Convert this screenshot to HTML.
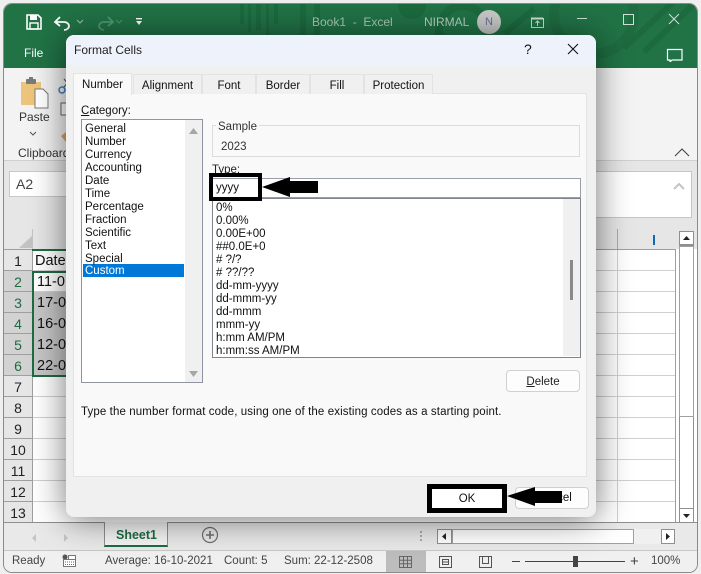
<!DOCTYPE html>
<html><head><meta charset="utf-8">
<style>
html,body{margin:0;padding:0;background:#efefef}
body{width:701px;height:574px;overflow:hidden;position:relative;font-family:"Liberation Sans",sans-serif;font-size:11.5px;color:#222}
div,span,svg{position:absolute}
.t{white-space:nowrap}
.h{background:#d0d0d0}.v{background:#d0d0d0}
.rn{left:4px;width:28px;text-align:center;font-size:14px;color:#222;height:20px;line-height:23px;background:#e6e6e6;border-bottom:1px solid #9f9f9f}
.li{left:85px;white-space:nowrap;height:13px;line-height:15px;color:#111}
.ti{left:216px;white-space:nowrap;height:13px;line-height:15px;color:#111}
.tab{top:74px;height:19px;line-height:22px;text-align:center;background:#f0f0f0;border:1px solid #e3e3e3;border-bottom:0;box-sizing:content-box;color:#111;font-size:11.5px}
.cell{left:37px;width:30px;font-size:14.5px;height:20px;line-height:23px;white-space:nowrap;overflow:hidden;color:#111}
</style></head><body>
<div id="win" style="left:4px;top:4px;width:693px;height:568px;background:#fff;border-radius:8px;overflow:hidden;box-shadow:0 0 0 1px #8a8a8a">

<div style="left:0;top:0;width:693px;height:64px;background:#217346"></div>
<svg style="left:0;top:0" width="693" height="64">
<g fill="#1c6a3e"><rect x="236" y="0" width="4" height="20"/><rect x="244" y="0" width="3" height="28"/><rect x="252" y="0" width="5" height="26"/><rect x="262" y="0" width="3" height="34"/><rect x="270" y="0" width="4" height="20"/><rect x="296" y="0" width="6" height="32"/><rect x="310" y="0" width="6" height="32"/><circle cx="408" cy="1" r="14"/></g>
<circle cx="459" cy="26" r="24" fill="none" stroke="#1c6a3e" stroke-width="8"/>
<circle cx="590" cy="10" r="40" fill="none" stroke="#1f6c41" stroke-width="10"/>
<g stroke="#1c6a3e" stroke-width="6"><path d="M620 44L680 -12"/><path d="M640 48L700 -10"/><path d="M500 30L530 5"/></g>
</svg>

<svg style="left:22px;top:10px" width="16" height="16" viewBox="0 0 16 16"><path d="M1 1H12L15 4V15H1Z" fill="none" stroke="#fff" stroke-width="1.6"/><rect x="4" y="1" width="7" height="5" fill="#fff"/><rect x="4" y="9" width="8" height="6" fill="none" stroke="#fff" stroke-width="1.4"/></svg>
<svg style="left:50px;top:12px" width="22" height="16" viewBox="0 0 22 16"><path d="M2 6H10C14 6 15 9 15 10C15 12 13 14 10 14" fill="none" stroke="#fff" stroke-width="1.8"/><path d="M6 1L1 6L6 10" fill="none" stroke="#fff" stroke-width="1.8"/></svg>
<svg style="left:72px;top:15px" width="8" height="6"><path d="M1 1L4 4L7 1" fill="none" stroke="#9fc4ad"/></svg>
<svg style="left:90px;top:12px" width="20" height="16" viewBox="0 0 20 16"><path d="M18 6H10C6 6 5 9 5 10C5 12 7 14 10 14" fill="none" stroke="#4e9a72" stroke-width="1.8"/><path d="M14 1L19 6L14 10" fill="none" stroke="#4e9a72" stroke-width="1.8"/></svg>
<svg style="left:111px;top:15px" width="8" height="6"><path d="M1 1L4 4L7 1" fill="none" stroke="#4e9a72"/></svg>
<svg style="left:131px;top:13px" width="9" height="10"><rect x="1" y="1" width="6" height="1.4" fill="#fff"/><path d="M1 4H7L4 8Z" fill="#fff"/></svg>
<div class="t" style="left:20px;top:42px;color:#fff;font-size:12px">File</div>
<div class="t" style="left:308px;top:11px;color:#a9cbb8;font-size:12px">Book1&nbsp; -&nbsp; Excel</div>
<div class="t" style="left:420px;top:11px;color:#b5d2c1;font-size:12px">NIRMAL</div>
<div style="left:473px;top:6px;width:24px;height:24px;border-radius:50%;background:#c8cbc9;color:#6c6c92;text-align:center;line-height:24px;font-size:11px">N</div>
<svg style="left:524px;top:9px" width="16" height="16"><rect x="3.5" y="5.5" width="12" height="9" fill="none" stroke="#cfe0d6"/><path d="M3 5.500H15" stroke="#cfe0d6" stroke-width="2"/><path d="M9.500 13V8M7.500 10L9.500 8L11.500 10" fill="none" stroke="#cfe0d6"/></svg>
<div style="left:573px;top:14px;width:10px;height:1px;background:#cfe0d6"></div>
<div style="left:619px;top:10px;width:9px;height:9px;border:1px solid #cfe0d6"></div>
<svg style="left:664px;top:9px" width="12" height="12"><path d="M1 1L11 11M11 1L1 11" stroke="#cfe0d6" stroke-width="1"/></svg>
<svg style="left:661px;top:40px" width="18" height="18"><path d="M2.500 5.500H17V16H7L5 18V16H2.500Z" fill="none" stroke="#fff" stroke-width="1.200"/></svg>

<div style="left:0;top:64px;width:693px;height:92px;background:#f3f3f3;border-bottom:1px solid #d0d0d0"></div>
<svg style="left:16px;top:72px" width="34" height="34" viewBox="0 0 34 34">
<path d="M1 6H21V29H1Z" fill="#edc47b"/><rect x="6" y="3" width="10" height="5" rx="1" fill="#7a7a7a"/><rect x="9" y="1" width="4" height="3" fill="#7a7a7a"/><path d="M15 13H23L28 18V32H15Z" fill="#fff" stroke="#7a7a7a"/></svg>
<div class="t" style="left:15px;top:106px;color:#333;font-size:12px">Paste</div>
<svg style="left:25px;top:127px" width="8" height="5"><path d="M1 1L4 4L7 1" fill="none" stroke="#555"/></svg>
<div class="t" style="left:14px;top:142px;color:#333;font-size:12px">Clipboard</div>
<svg style="left:54px;top:70px" width="12" height="70"><circle cx="4" cy="16" r="3" fill="none" stroke="#3b7fc4" stroke-width="1.500"/><path d="M6 13L12 6M6 5L12 12" stroke="#555"/><rect x="3" y="29" width="9" height="12" fill="#fff" stroke="#666"/><path d="M3 62L12 55V66L8 68Z" fill="#d9a860"/></svg>
<svg style="left:670px;top:143px" width="16" height="10"><path d="M1 9L8 2L15 9" fill="none" stroke="#444" stroke-width="1.100"/></svg>

<div style="left:0;top:157px;width:693px;height:68px;background:#e6e6e6"></div>
<div style="left:5px;top:167px;width:60px;height:26px;background:#fff;border:1px solid #c9c9c9;box-sizing:border-box"></div>
<div class="t" style="left:12px;top:172px;font-size:14px;color:#444">A2</div>
<div style="left:560px;top:167px;width:128px;height:47px;background:#fff;border:1px solid #c6c6c6;box-sizing:border-box"></div>
<svg style="left:669px;top:179px" width="12" height="8"><path d="M1 6L6 1L11 6" fill="none" stroke="#c4c4c4" stroke-width="2"/></svg>

<div style="left:0;top:225px;width:693px;height:20px;background:#e6e6e6"></div>
<svg style="left:12px;top:229px" width="18" height="16"><path d="M17 2V15H3Z" fill="#c3c3c3"/></svg>
<div style="left:28px;top:225px;width:1px;height:20px;background:#c4c4c4"></div>
<div style="left:613px;top:225px;width:1px;height:20px;background:#a9a9a9"></div>
<div style="left:649px;top:231px;width:2px;height:10px;background:#1268b3"></div>
<div style="left:0;top:245px;width:671px;height:1px;background:#9f9f9f"></div>
<div style="left:671px;top:245px;width:1px;height:273px;background:#9f9f9f"></div>
<div style="left:28px;top:245px;width:1px;height:273px;background:#9f9f9f"></div>

<div class="h" style="left:29px;top:266px;width:642px;height:1px"></div>
<div class="h" style="left:29px;top:287px;width:642px;height:1px"></div>
<div class="h" style="left:29px;top:308px;width:642px;height:1px"></div>
<div class="h" style="left:29px;top:329px;width:642px;height:1px"></div>
<div class="h" style="left:29px;top:350px;width:642px;height:1px"></div>
<div class="h" style="left:29px;top:371px;width:642px;height:1px"></div>
<div class="h" style="left:29px;top:392px;width:642px;height:1px"></div>
<div class="h" style="left:29px;top:413px;width:642px;height:1px"></div>
<div class="h" style="left:29px;top:434px;width:642px;height:1px"></div>
<div class="h" style="left:29px;top:455px;width:642px;height:1px"></div>
<div class="h" style="left:29px;top:476px;width:642px;height:1px"></div>
<div class="h" style="left:29px;top:497px;width:642px;height:1px"></div>
<div class="v" style="left:613px;top:246px;width:1px;height:272px"></div>

<div class="rn" style="left:0;top:246px">1</div>
<div class="rn" style="left:0;top:267px;background:#d2d2d2;color:#1e6b42">2</div>
<div class="rn" style="left:0;top:288px;background:#d2d2d2;color:#1e6b42">3</div>
<div class="rn" style="left:0;top:309px;background:#d2d2d2;color:#1e6b42">4</div>
<div class="rn" style="left:0;top:330px;background:#d2d2d2;color:#1e6b42">5</div>
<div class="rn" style="left:0;top:351px;background:#d2d2d2;color:#1e6b42">6</div>
<div class="rn" style="left:0;top:372px">7</div>
<div class="rn" style="left:0;top:393px">8</div>
<div class="rn" style="left:0;top:414px">9</div>
<div class="rn" style="left:0;top:435px">10</div>
<div class="rn" style="left:0;top:456px">11</div>
<div class="rn" style="left:0;top:477px">12</div>
<div class="rn" style="left:0;top:498px">13</div>

<div style="left:29px;top:288px;width:40px;height:84px;background:#c6c6c6"></div>
<div style="left:28px;top:267px;width:40px;height:106px;border:2px solid #1e6b42;box-sizing:border-box"></div>
<div style="left:28px;top:245px;width:40px;height:2px;background:#1e6b42"></div>
<div class="cell" style="left:31px;top:246px">Date</div>
<div class="cell" style="left:33px;top:267px">11-0</div>
<div class="cell" style="left:33px;top:288px">17-0</div>
<div class="cell" style="left:33px;top:309px">16-0</div>
<div class="cell" style="left:33px;top:330px">12-0</div>
<div class="cell" style="left:33px;top:351px">22-0</div>

<div style="left:675px;top:227px;width:15px;height:292px;background:#fff;border:1px solid #8f8f8f;box-sizing:border-box"></div>
<div style="left:675px;top:227px;width:15px;height:15px;background:#fff;border:1px solid #8f8f8f;box-sizing:border-box;border-bottom:2px solid #8f8f8f"></div>
<svg style="left:678px;top:231px" width="9" height="6"><path d="M1 5H8L4.500 1Z" fill="#222"/></svg>
<div style="left:675px;top:242px;width:15px;height:171px;background:#fff;border:1px solid #a0a0a0;box-sizing:border-box"></div>
<div style="left:675px;top:504px;width:15px;height:15px;background:#fff;border:1px solid #8f8f8f;box-sizing:border-box"></div>
<svg style="left:678px;top:509px" width="9" height="6"><path d="M1 1H8L4.500 5Z" fill="#222"/></svg>

<div style="left:0;top:518px;width:693px;height:28px;background:#e9e9e9;border-top:1px solid #8f8f8f;box-sizing:border-box"></div>
<svg style="left:27px;top:529px" width="40" height="10"><path d="M5 1V9L1 5Z" fill="#c5c5c5"/><path d="M33 1V9L37 5Z" fill="#c5c5c5"/></svg>
<div style="left:100px;top:518px;width:64px;height:25px;background:#f4f4f4;border:1px solid #8f8f8f;border-top:0;border-bottom:2px solid #1e6b42;box-sizing:border-box"></div>
<div class="t" style="left:112px;top:524px;color:#1e6b42;font-size:12.5px;font-weight:bold">Sheet1</div>
<svg style="left:197px;top:522px" width="18" height="18"><circle cx="9" cy="9" r="7.500" fill="none" stroke="#6e6e6e" stroke-width="1.200"/><path d="M5 9H13M9 5V13" stroke="#6e6e6e" stroke-width="1.600"/></svg>
<div style="left:416px;top:527px;width:2px;height:2px;background:#aaa;box-shadow:0 4px 0 #aaa,0 8px 0 #aaa"></div>
<div style="left:433px;top:525px;width:238px;height:15px;background:#f0f0f0"></div>
<div style="left:433px;top:525px;width:15px;height:15px;background:#fff;border:1px solid #8f8f8f;box-sizing:border-box"></div>
<svg style="left:437px;top:528px" width="7" height="9"><path d="M5 1V8L1 4.500Z" fill="#222"/></svg>
<div style="left:448px;top:525px;width:182px;height:15px;background:#fff;border:1px solid #a0a0a0;box-sizing:border-box"></div>
<div style="left:657px;top:525px;width:14px;height:15px;background:#fff;border:1px solid #8f8f8f;box-sizing:border-box"></div>
<svg style="left:660px;top:528px" width="7" height="9"><path d="M2 1V8L6 4.500Z" fill="#222"/></svg>

<div style="left:0;top:546px;width:693px;height:22px;background:#f0f0f0;border-top:1px solid #c8c8c8;box-sizing:border-box;color:#555"></div>
<div class="t" style="left:8px;top:551px;color:#444;font-size:11.500px">Ready</div>
<svg style="left:57px;top:549px" width="16" height="15"><circle cx="4" cy="4" r="2.500" fill="#555"/><rect x="2.500" y="6.500" width="12" height="7" fill="#fff" stroke="#777"/><rect x="7.500" y="2.500" width="7" height="4" fill="#fff" stroke="#777"/><path d="M4 9H13M4 11.500H13" stroke="#666" stroke-dasharray="1 1"/></svg>
<div class="t" style="left:101px;top:551px;color:#444;font-size:11.500px">Average: 16-10-2021</div>
<div class="t" style="left:220px;top:551px;color:#444;font-size:11.500px">Count: 5</div>
<div class="t" style="left:280px;top:551px;color:#444;font-size:11.500px">Sum: 22-12-2508</div>
<div style="left:382px;top:547px;width:40px;height:21px;background:#bdbdbd"></div>
<svg style="left:394px;top:551px" width="15" height="14"><path d="M1.500 1.500H13.500V12.500H1.500ZM1.500 5.200H13.500M1.500 8.800H13.500M5.500 1.500V12.500M9.500 1.500V12.500" fill="none" stroke="#666"/></svg>
<svg style="left:434px;top:551px" width="15" height="14"><path d="M1.500 1.500H13.500V12.500H1.500Z" fill="none" stroke="#555"/><path d="M4.500 4.500H10.500V9.500H4.500ZM4.500 7H10.500" fill="none" stroke="#555"/></svg>
<svg style="left:474px;top:551px" width="15" height="14"><path d="M1.500 1.500H13.500V12.500H1.500ZM4.500 1.500V8.500H10.500V1.500" fill="none" stroke="#555"/></svg>
<div style="left:508px;top:557px;width:8px;height:1px;background:#444"></div>
<div style="left:521px;top:557px;width:100px;height:1px;background:#444"></div>
<div style="left:569px;top:552px;width:5px;height:11px;background:#444"></div>
<div class="t" style="left:626px;top:549px;color:#444;font-size:15px">+</div>
<div class="t" style="left:647px;top:551px;color:#444;font-size:11.500px">100%</div>
</div>

<!-- dialog -->
<div style="left:66px;top:35px;width:530px;height:482px;background:#f0f0f0;border-radius:8px;box-shadow:0 2px 34px rgba(0,0,0,.55);overflow:hidden">
<div style="left:0;top:0;width:530px;height:30px;background:#eef2fb"></div>
<div style="left:7px;top:58px;width:514px;height:384px;background:#f9f9f9;border:1px solid #e3e3e3;box-sizing:border-box"></div>
</div>
<div class="t" style="left:74px;top:43px;font-size:12px;color:#222">Format Cells</div>
<div class="t" style="left:524px;top:41px;font-size:14px;color:#111">?</div>
<svg style="left:567px;top:43px" width="12" height="12"><path d="M1 1L11 11M11 1L1 11" stroke="#111" stroke-width="1.100"/></svg>

<div class="tab" style="left:73px;width:57px;top:73px;height:21px;background:#f9f9f9;line-height:23px">Number</div>
<div class="tab" style="left:133px;width:67px">Alignment</div>
<div class="tab" style="left:202px;width:52px">Font</div>
<div class="tab" style="left:256px;width:52px">Border</div>
<div class="tab" style="left:310px;width:52px">Fill</div>
<div class="tab" style="left:364px;width:67px">Protection</div>

<div class="t" style="left:81px;top:105px;color:#111"><u>C</u>ategory:</div>
<div style="left:81px;top:119px;width:122px;height:264px;background:#fff;border:1px solid #8f94a0;box-sizing:border-box"></div>
<div style="left:185px;top:120px;width:17px;height:262px;background:#f0f0f0"></div>
<svg style="left:188px;top:127px" width="11" height="8"><path d="M1 7H10L5.500 1Z" fill="#a6a6a6"/></svg>
<svg style="left:188px;top:370px" width="11" height="8"><path d="M1 1H10L5.500 7Z" fill="#a6a6a6"/></svg>
<div style="left:83px;top:264px;width:101px;height:13px;background:#0078d7"></div>
<div class="li" style="top:122px">General</div>
<div class="li" style="top:135px">Number</div>
<div class="li" style="top:148px">Currency</div>
<div class="li" style="top:161px">Accounting</div>
<div class="li" style="top:174px">Date</div>
<div class="li" style="top:187px">Time</div>
<div class="li" style="top:200px">Percentage</div>
<div class="li" style="top:213px">Fraction</div>
<div class="li" style="top:226px">Scientific</div>
<div class="li" style="top:239px">Text</div>
<div class="li" style="top:252px">Special</div>
<div class="li" style="top:264px;color:#fff">Custom</div>

<div style="left:212px;top:125px;width:368px;height:32px;border:1px solid #dcdcdc;box-sizing:border-box"></div>
<div class="t" style="left:216px;top:121px;background:#f9f9f9;padding:0 2px;color:#333">Sample</div>
<div class="t" style="left:221px;top:141px;color:#333">2023</div>
<div class="t" style="left:212px;top:164px;color:#222">Type:</div>
<div style="left:212px;top:178px;width:369px;height:20px;background:#fff;border:1px solid #9a9eaa;box-sizing:border-box"></div>
<div style="left:212px;top:198px;width:369px;height:160px;background:#fff;border:1px solid #80848f;box-sizing:border-box"></div>
<div style="left:563px;top:199px;width:17px;height:157px;background:#f0f0f0"></div>
<div style="left:570px;top:260px;width:3px;height:40px;background:#8a8a8a"></div>
<div class="ti" style="top:201px">0%</div>
<div class="ti" style="top:214px">0.00%</div>
<div class="ti" style="top:227px">0.00E+00</div>
<div class="ti" style="top:240px">##0.0E+0</div>
<div class="ti" style="top:253px"># ?/?</div>
<div class="ti" style="top:266px"># ??/??</div>
<div class="ti" style="top:279px">dd-mm-yyyy</div>
<div class="ti" style="top:292px">dd-mmm-yy</div>
<div class="ti" style="top:305px">dd-mmm</div>
<div class="ti" style="top:318px">mmm-yy</div>
<div class="ti" style="top:331px">h:mm AM/PM</div>
<div class="ti" style="top:344px">h:mm:ss AM/PM</div>

<div style="left:506px;top:370px;width:74px;height:22px;background:#fdfdfd;border:1px solid #d0d0d0;border-radius:4px;box-sizing:border-box;text-align:center;line-height:22px;color:#222"><u>D</u>elete</div>
<div class="t" style="left:81px;top:406px;color:#111;letter-spacing:.11px">Type the number format code, using one of the existing codes as a starting point.</div>

<div style="left:515px;top:487px;width:74px;height:22px;background:#fdfdfd;border:1px solid #d0d0d0;border-radius:4px;box-sizing:border-box"></div>
<div class="t" style="left:536px;top:492px;color:#111">Cancel</div>

<!-- annotations -->
<div style="left:209px;top:173px;width:53px;height:28px;border:4.500px solid #000;box-sizing:border-box"></div>
<div class="t" style="left:216px;top:182px;color:#111">yyyy</div>
<svg style="left:262px;top:176px" width="57" height="22"><path d="M0 11L28 1V5H56V17H28V21Z" fill="#000"/></svg>
<div style="left:427px;top:484px;width:80px;height:29px;background:#fff;border:5px solid #000;box-sizing:border-box;text-align:center;line-height:21px;color:#111">OK</div>
<svg style="left:507px;top:486px" width="56" height="21"><path d="M0 10L28 1V5H55V17H28V20Z" fill="#000"/></svg>
</body></html>
